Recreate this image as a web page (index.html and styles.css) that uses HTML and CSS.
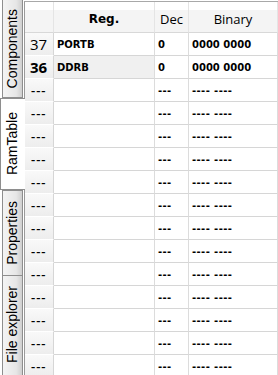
FILE: index.html
```html
<!DOCTYPE html>
<html>
<head>
  <meta charset="utf-8">
  <meta name="viewport" content="width=device-width">
  <link rel="stylesheet" href="styles.css">
  <title>RamTable</title>
</head>
<body>
  <div class="dock">
    <nav class="tabs">
      <div class="tab tab-components"><span>Components</span></div>
      <div class="tab tab-ram active"><span>RamTable</span></div>
      <div class="tab tab-props"><span>Properties</span></div>
      <div class="tab tab-files"><span>File explorer</span></div>
    </nav>
    <section class="panel">
      <table class="grid">
        <thead>
          <tr>
            <th class="rowhead"></th>
            <th class="col-reg bold">Reg.</th>
            <th class="col-dec">Dec</th>
            <th class="col-bin">Binary</th>
          </tr>
        </thead>
        <tbody>
          <tr>
            <td class="rowhead num">37</td>
            <td>PORTB</td>
            <td>0</td>
            <td>0000 0000</td>
          </tr>
          <tr>
            <td class="rowhead num current">36</td>
            <td class="selected">DDRB</td>
            <td>0</td>
            <td>0000 0000</td>
          </tr>
          <tr><td class="rowhead">---</td><td></td><td class="dash">---</td><td class="dash">---- ----</td></tr>
          <tr><td class="rowhead">---</td><td></td><td class="dash">---</td><td class="dash">---- ----</td></tr>
          <tr><td class="rowhead">---</td><td></td><td class="dash">---</td><td class="dash">---- ----</td></tr>
          <tr><td class="rowhead">---</td><td></td><td class="dash">---</td><td class="dash">---- ----</td></tr>
          <tr><td class="rowhead">---</td><td></td><td class="dash">---</td><td class="dash">---- ----</td></tr>
          <tr><td class="rowhead">---</td><td></td><td class="dash">---</td><td class="dash">---- ----</td></tr>
          <tr><td class="rowhead">---</td><td></td><td class="dash">---</td><td class="dash">---- ----</td></tr>
          <tr><td class="rowhead">---</td><td></td><td class="dash">---</td><td class="dash">---- ----</td></tr>
          <tr><td class="rowhead">---</td><td></td><td class="dash">---</td><td class="dash">---- ----</td></tr>
          <tr><td class="rowhead">---</td><td></td><td class="dash">---</td><td class="dash">---- ----</td></tr>
          <tr><td class="rowhead">---</td><td></td><td class="dash">---</td><td class="dash">---- ----</td></tr>
          <tr><td class="rowhead">---</td><td></td><td class="dash">---</td><td class="dash">---- ----</td></tr>
          <tr><td class="rowhead">---</td><td></td><td class="dash">---</td><td class="dash">---- ----</td></tr>
        </tbody>
      </table>
    </section>
  </div>
</body>
</html>
```

FILE: styles.css
```css
html, body {
  margin: 0;
  height: 100%;
  overflow: hidden;
  background-color: #ffffff;
}
.dock {
  display: flex;
  height: 375px;
}
.tabs {
  display: flex;
  flex-direction: column;
  width: 24px;
  flex: none;
  position: relative;
  z-index: 1;
}
.tab {
  box-sizing: border-box;
  display: flex;
  align-items: center;
  justify-content: center;
  width: 21px;
  margin-left: 2px;
  border: 1px solid #8e8e8e;
  border-top: 0;
  background: linear-gradient(to right, #f4f4f4, #e6e6e6 70%, #cfcfcf);
  font-family: "Liberation Sans", Arial, sans-serif;
  font-size: 14px;
  color: #000000;
  flex: none;
}
.tab span {
  writing-mode: vertical-rl;
  transform: rotate(180deg);
  white-space: nowrap;
  padding-left: 1px;
}
.tab-components {
  height: 98px;
}
.tab-ram {
  height: 92px;
}
.tab-props {
  height: 86px;
  border-top: 1px solid #8e8e8e;
}
.tab-files {
  height: 110px;
}
.tab-files span {
  margin-top: -12px;
}
.tab.active {
  width: 25px;
  margin-left: 0;
  margin-right: -1px;
  border-top: 1px solid #8e8e8e;
  border-right: 0;
  background: #ffffff;
}
.tab.active span {
  padding-left: 2px;
}
.panel {
  flex: 1;
  margin-top: 1px;
  border-left: 1px solid #9a9a9a;
  border-top: 1px solid #a8a8a8;
  overflow: hidden;
}
.grid {
  table-layout: fixed;
  border-collapse: separate;
  border-spacing: 0;
  width: 100%;
  font-family: "DejaVu Sans", Tahoma, sans-serif;
  font-size: 10px;
  font-weight: bold;
}
.grid th,
.grid td {
  box-sizing: border-box;
  padding: 0 0 0 3px;
  border-right: 1px solid #dcdcdc;
  border-bottom: 1px solid #d6d6d6;
  white-space: nowrap;
  overflow: hidden;
  text-align: left;
}
.grid th {
  height: 31px;
  padding: 3px 0 0 0;
  text-align: center;
  font-family: "Open Sans", "Segoe UI", sans-serif;
  font-size: 13px;
  font-weight: normal;
  background: linear-gradient(#ffffff 0 28%, #f4f4f4 28%);
  border-right-color: #e4e4e4;
  border-bottom-color: #d8d8d8;
}
.grid th.bold {
  font-family: "DejaVu Sans", Tahoma, sans-serif;
  font-size: 12px;
  font-weight: bold;
}
.grid td {
  height: 23px;
}
.grid th.rowhead {
  width: 29px;
}
.col-reg {
  width: 101px;
}
.col-dec {
  width: 34px;
}
.grid td.rowhead {
  padding-left: 6px;
  font-family: "Open Sans", "Segoe UI", sans-serif;
  font-size: 13px;
  font-weight: 600;
  letter-spacing: 1px;
  background: linear-gradient(#f9f9f9, #ededed);
  border-bottom-color: #ffffff;
  border-right-color: #d6d6d6;
}
.grid td.num {
  font-size: 15px;
  font-weight: normal;
  letter-spacing: 0;
  padding-left: 5px;
}
.grid td.current {
  font-weight: bold;
}
.grid td.selected {
  background-color: #f0f0f0;
}
.grid td.dash {
  letter-spacing: 0.4px;
}
```
